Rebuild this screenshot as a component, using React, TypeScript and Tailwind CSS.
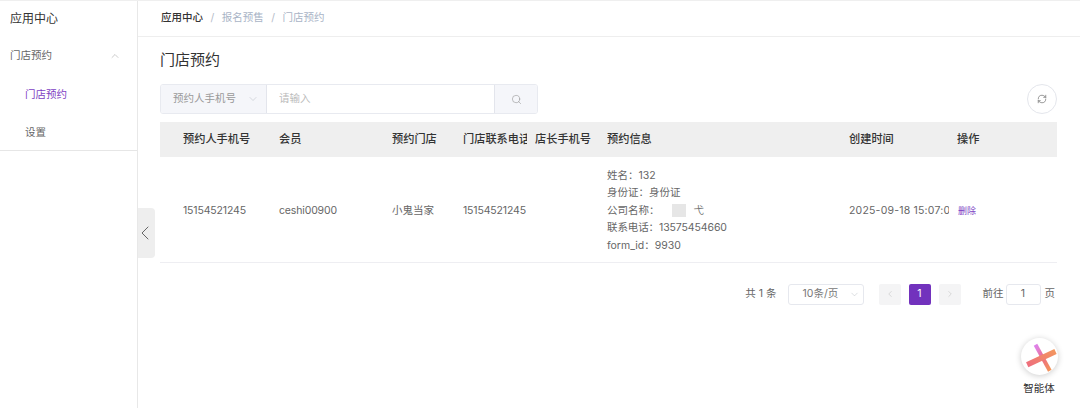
import { useState } from "react";
import { ChevronDown, ChevronLeft, ChevronRight, ChevronUp, RefreshCw, Search } from "lucide-react";

const FONT = "font-['Inter','Noto_Sans_CJK_SC',sans-serif]";

const columns = ["预约人手机号", "会员", "预约门店", "门店联系电话", "店长手机号", "预约信息", "创建时间", "操作"];

const Logo = () => (
  <svg width="32" height="32" viewBox="0 0 32 32" className="overflow-visible">
    <defs>
      <linearGradient id="barA" x1="0" y1="1" x2="1" y2="0">
        <stop offset="0" stopColor="#ee6a80" />
        <stop offset="1" stopColor="#f39a5c" />
      </linearGradient>
      <linearGradient id="barB" x1="0" y1="0" x2="1" y2="1">
        <stop offset="0" stopColor="#dc80f5" />
        <stop offset="0.2" stopColor="#e080d8" />
        <stop offset="0.5" stopColor="#ec6d86" />
        <stop offset="1" stopColor="#f59a50" />
      </linearGradient>
    </defs>
    <path d="M10.75 4.76 L14.25 2.84 L28.55 28.84 L25.05 30.76 Z" fill="url(#barB)" />
    <path d="M3.05 21.36 L31.35 8.06 L33.65 12.94 L5.35 26.24 Z" fill="url(#barA)" />
  </svg>
);

const App = () => {
  const [keyword, setKeyword] = useState("");
  return (
    <div className={`${FONT} flex h-[408px] w-[1080px] overflow-hidden border-t border-[#efefef] bg-white text-[10.5px] text-[#666]`}>
      {/* sidebar */}
      <aside className="h-full w-[138px] shrink-0 border-r border-[#e8e8e8]">
        <div className="border-b border-[#e6e6e6]">
          <div className="flex h-[36px] items-center pl-[10px] text-[12px] text-[#333]">应用中心</div>
          <div className="flex h-[37px] items-center justify-between pl-[10px] pr-[16px]">
            <span>门店预约</span>
            <ChevronUp size={12} strokeWidth={1} className="text-[#999]" />
          </div>
          <div className="flex h-[38px] items-center pl-[25px] pt-[4px] text-[#7e3fc4]">门店预约</div>
          <div className="flex h-[38px] items-center pl-[25px] pt-[4px]">设置</div>
        </div>
      </aside>

      {/* collapse handle */}
      <div className="relative w-0">
        <button className="absolute left-0 top-[207px] flex h-[50px] w-[17px] items-center justify-center rounded-r-[4px] bg-[#eeeeee] pr-[3px] text-[#666]">
          <ChevronLeft size={24} strokeWidth={1} className="shrink-0" />
        </button>
      </div>

      <main className="min-w-0 flex-1">
        <div className="flex h-[36px] items-center gap-[7.5px] border-b border-[#eeeeee] pb-[1px] pl-[23px] text-[#a9b4c6]">
          <span className="font-medium text-[#333]">应用中心</span>
          <span className="text-[#b5bcc9]">/</span>
          <span>报名预售</span>
          <span className="text-[#b5bcc9]">/</span>
          <span>门店预约</span>
        </div>

        <div className="pl-[22px] pr-[23px]">
          <h1 className="flex h-[47px] items-center text-[15px] font-normal text-[#333]">门店预约</h1>

          <div className="flex h-[30px] items-center justify-between">
            <div className="flex h-[30px] w-[378px] overflow-hidden rounded-[3px] border border-[#e8eaf0]">
              <div className="flex w-[106px] items-center justify-between border-r border-[#e3e5ec] bg-[#f5f6fa] pl-[12px] pr-[7px] text-[#999]">
                <span>预约人手机号</span>
                <ChevronDown size={12} strokeWidth={1} className="text-[#b5b8c0]" />
              </div>
              <input
                value={keyword}
                onChange={(e) => setKeyword(e.target.value)}
                placeholder="请输入"
                className="min-w-0 flex-1 px-[12px] outline-none placeholder:text-[#bbb]"
              />
              <div className="flex w-[43px] items-center justify-center border-l border-[#e3e5ec] bg-[#f5f6fa] text-[#888]">
                <Search size={11} strokeWidth={1.1} />
              </div>
            </div>
            <button className="flex h-[30px] w-[30px] items-center justify-center rounded-full border border-[#e4e6ec] text-[#555]">
              <RefreshCw size={10} strokeWidth={1.4} />
            </button>
          </div>

          <div className="mt-[8px] grid h-[35px] grid-cols-[96px_113px_71px_72px_72px_242px_108px_1fr] items-center bg-[#efefef] pl-[23px] text-[11.2px] font-medium text-[#333]">
            {columns.map((c) => (
              <div key={c} className="mr-[8px] min-w-0 overflow-hidden whitespace-nowrap">
                {c}
              </div>
            ))}
          </div>

          <div className="grid h-[106px] grid-cols-[96px_113px_71px_72px_72px_242px_108px_1fr] items-center border-b border-[#eeeef2] pl-[23px] pt-[2px]">
            <div className="tracking-[-0.15px]">15154521245</div>
            <div className="tracking-[-0.15px]">ceshi00900</div>
            <div>小鬼当家</div>
            <div className="tracking-[-0.15px]">15154521245</div>
            <div />
            <div className="leading-[17.5px]">
              <div>姓名：132</div>
              <div>身份证：身份证</div>
              <div className="flex items-center">
                公司名称：
                <span className="ml-[12px] h-[13px] w-[14px] bg-[#e6e6e6]" />
                <span className="ml-[8px] text-[#777]">弋</span>
              </div>
              <div className="tracking-[-0.1px]">联系电话：13575454660</div>
              <div>form_id：9930</div>
            </div>
            <div className="mr-[8px] min-w-0 overflow-hidden whitespace-nowrap tracking-[0.2px]">2025-09-18 15:07:08</div>
            <div className="ml-[1px] text-[9px] text-[#7e3fc4]">删除</div>
          </div>

          {/* pagination */}
          <div className="mt-[20px] flex h-[22px] items-center justify-end pr-[2px]">
            <span>共 1 条</span>
            <div className="ml-[11px] flex h-[21px] w-[76px] items-center justify-between rounded-[3px] border border-[#e6e8ee] pl-[14px] pr-[3px] text-[#777]">
              <span>10条/页</span>
              <ChevronDown size={11} strokeWidth={1} className="text-[#b5b8c0]" />
            </div>
            <div className="ml-[15px] flex gap-[8px]">
              <div className="flex h-[21px] w-[22px] items-center justify-center rounded-[2px] bg-[#f4f4f5] text-[#bbb]">
                <ChevronLeft size={10} strokeWidth={1.2} />
              </div>
              <div className="flex h-[21px] w-[22px] items-center justify-center rounded-[2px] bg-[#7232bd] text-white">1</div>
              <div className="flex h-[21px] w-[22px] items-center justify-center rounded-[2px] bg-[#f4f4f5] text-[#bbb]">
                <ChevronRight size={10} strokeWidth={1.2} />
              </div>
            </div>
            <span className="ml-[22px]">前往</span>
            <div className="ml-[2px] flex h-[21px] w-[35px] items-center justify-center rounded-[3px] border border-[#e6e8ee]">1</div>
            <span className="ml-[4px]">页</span>
          </div>
        </div>

        {/* floating agent button */}
        <div className="absolute left-[1020px] top-[338px] flex w-[38px] flex-col items-center">
          <div className="flex h-[37px] w-[37px] items-center justify-center rounded-full bg-white shadow-[0_1px_6px_rgba(0,0,0,0.2)]">
            <Logo />
          </div>
          <span className="mt-[6px] whitespace-nowrap text-[10.5px] text-[#333]">智能体</span>
        </div>
      </main>
    </div>
  );
};

export default App;
